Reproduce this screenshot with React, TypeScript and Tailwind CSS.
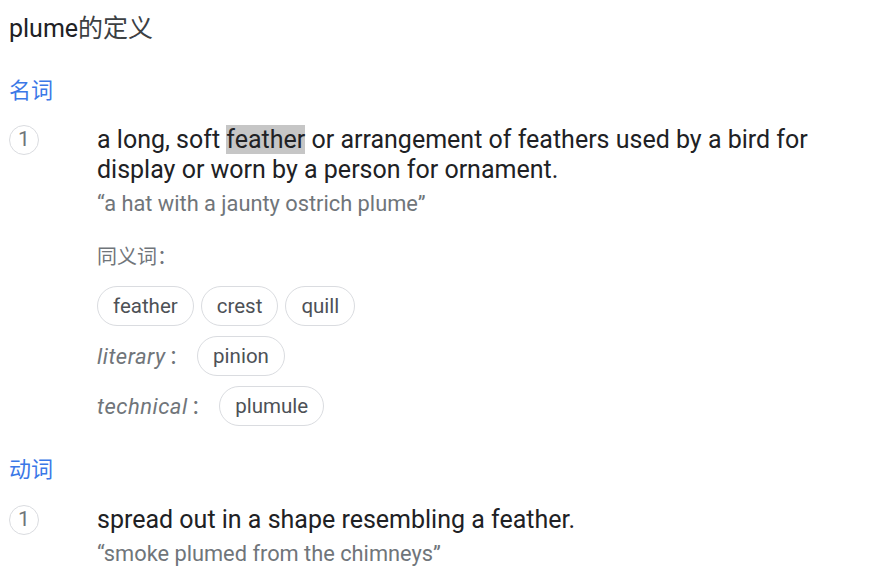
import React from 'react';

const FONT = "font-['Roboto','Noto_Sans_CJK_SC',sans-serif]";

interface ChipRowProps {
  label?: string;
  words: string[];
}

const Chip: React.FC<{ word: string }> = ({ word }) => (
  <span className="h-[40px] px-[15px] flex items-center rounded-full border border-[#dadce0] text-[20.5px] text-[#4d5156]">
    {word}
  </span>
);

const ChipRow: React.FC<ChipRowProps> = ({ label, words }) => (
  <div className="flex items-center gap-[7px]">
    {label && (
      <span className="italic text-[22px] tracking-[0.5px] text-[#70757a] mr-[1px]">
        {label}
        <span className="not-italic text-[20px] pl-[3px]">：</span>
      </span>
    )}
    {words.map((w) => (
      <Chip key={w} word={w} />
    ))}
  </div>
);

const Sense: React.FC<{ children: React.ReactNode }> = ({ children }) => (
  <div className="flex">
    <div className="w-[88px] shrink-0">
      <div className="w-[30px] h-[30px] rounded-full border border-[#dadce0] flex items-center justify-center text-[21px] text-[#70757a]">
        1
      </div>
    </div>
    <div className="flex-1 pr-[40px]">{children}</div>
  </div>
);

export default function App() {
  return (
    <div className={`${FONT} bg-white w-[876px] h-[567px] overflow-hidden pl-[9px]`}>
      {/* Header */}
      <div className="mt-[13px] h-[32px] leading-[32px] text-[25px] text-[#202124]">
        plume<span className="text-[#3c4043]">的定义</span>
      </div>

      {/* Noun */}
      <div className="mt-[32px] leading-[28px] text-[22px] text-[#3b78e7]">名词</div>
      <div className="mt-[20px]">
        <Sense>
          <p className="text-[25px] leading-[30px] text-[#202124]">
            a long, soft <span className="bg-[#c6c6c6]">feather</span> or arrangement of feathers used by a bird for display or worn by a person for ornament.
          </p>
          <p className="mt-[6px] text-[21.8px] leading-[26px] text-[#70757a]">
            “a hat with a jaunty ostrich plume”
          </p>
          <div className="mt-[26px] text-[20px] leading-[28px] text-[#70757a]">同义词：</div>
          <div className="mt-[15px] flex flex-col gap-[10px]">
            <ChipRow words={['feather', 'crest', 'quill']} />
            <ChipRow label="literary" words={['pinion']} />
            <ChipRow label="technical" words={['plumule']} />
          </div>
        </Sense>
      </div>

      {/* Verb */}
      <div className="mt-[30px] leading-[28px] text-[22px] text-[#3b78e7]">动词</div>
      <div className="mt-[21px]">
        <Sense>
          <p className="text-[25px] leading-[30px] text-[#202124]">
            spread out in a shape resembling a feather.
          </p>
          <p className="mt-[6px] text-[21.8px] leading-[26px] text-[#70757a]">
            “smoke plumed from the chimneys”
          </p>
        </Sense>
      </div>
    </div>
  );
}
